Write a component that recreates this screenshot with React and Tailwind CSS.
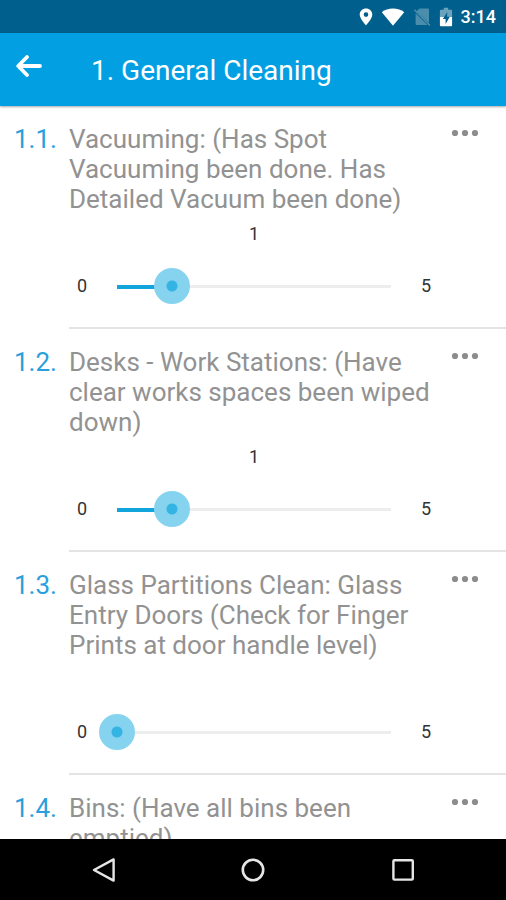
import { useState } from 'react';

const MAX_SCORE = 5;

const questions = [
  {
    id: '1.1.',
    title: 'Vacuuming: (Has Spot Vacuuming been done. Has Detailed Vacuum been done)',
    score: 1,
  },
  {
    id: '1.2.',
    title: 'Desks - Work Stations: (Have clear works spaces been wiped down)',
    score: 1,
  },
  {
    id: '1.3.',
    title: 'Glass Partitions Clean: Glass Entry Doors (Check for Finger Prints at door handle level)',
    score: 0,
  },
  {
    id: '1.4.',
    title: 'Bins: (Have all bins been emptied)',
    score: 0,
  },
];

function StatusBar() {
  return (
    <div className="flex h-[33px] shrink-0 items-center justify-end bg-[#005f8c] pr-2.5 text-white">
      <svg className="mr-2 h-[18px] w-3.5" viewBox="0 0 14 18" fill="currentColor">
        <path
          fillRule="evenodd"
          d="M7 0.5C3.4 0.5 0.7 3.2 0.7 6.6 0.7 11 7 17.5 7 17.5S13.3 11 13.3 6.6C13.3 3.2 10.6 0.5 7 0.5ZM7 4.3a2.3 2.3 0 1 1 0 4.6 2.3 2.3 0 0 1 0-4.6Z"
        />
      </svg>
      <svg className="mr-2 h-[18px] w-6" viewBox="0 0 24 18" fill="currentColor">
        <path d="M0.8 4.2C3.8 1.8 7.6 0.5 12 0.5s8.2 1.3 11.2 3.7L12 17.8Z" />
      </svg>
      <svg className="mr-2 h-5 w-[18px]" viewBox="0 0 18 20">
        <path d="M6.5 1.5H15a1 1 0 0 1 1 1V16L3.6 4.2ZM2.6 6.2 14.5 18H3.6a1 1 0 0 1-1-1Z" fill="#4a8dad" />
        <path d="M1.4 2.8 16.8 18.4" stroke="#4a8dad" strokeWidth="1.6" />
      </svg>
      <svg className="mr-2 h-5 w-3.5" viewBox="0 0 14 20">
        <path d="M4.8 0.8h4.4v1.9h2.9a1 1 0 0 1 1 1V10H0.9V3.7a1 1 0 0 1 1-1h2.9Z" fill="#6ba3be" />
        <path d="M0.9 10h12.2v8.2a1 1 0 0 1-1 1H1.9a1 1 0 0 1-1-1Z" fill="#fff" />
        <path d="M8.3 5 3.8 12.1h2.8V17l4.2-7.2H8.1Z" fill="#005f8c" />
      </svg>
      <span className="text-lg font-medium">3:14</span>
    </div>
  );
}

function Header() {
  return (
    <header className="z-10 flex h-[73px] shrink-0 items-center bg-[#029fe3] text-white shadow-[0_1px_2px_rgba(0,0,0,0.35)]">
      <button type="button" aria-label="Back" className="flex h-full w-[91px] items-center pb-2 pl-4">
        <svg
          className="h-[22px] w-[26px]"
          viewBox="0 0 26 22"
          fill="none"
          stroke="currentColor"
          strokeWidth="3.8"
          strokeLinecap="round"
          strokeLinejoin="round"
        >
          <path d="M24 11H2.4M11 2 2.2 11 11 20" />
        </svg>
      </button>
      <h1 className="pt-0.5 text-[28px]">1. General Cleaning</h1>
    </header>
  );
}

function ScoreSlider({ id, score, onChange }) {
  return (
    <div className="text-lg text-[#333]">
      <output htmlFor={id} className="block h-10 pt-2 text-center leading-6">
        {score > 0 ? score : ''}
      </output>
      <div className="flex items-center gap-1 pt-3.5">
        <span className="w-[26px] text-center">0</span>
        <input
          id={id}
          type="range"
          min="0"
          max={MAX_SCORE}
          value={score}
          onChange={(e) => onChange(Number(e.target.value))}
          style={{ '--fill': score / MAX_SCORE }}
          className="h-9 min-w-0 flex-1 cursor-pointer appearance-none bg-[image:linear-gradient(#12a5dc,#12a5dc),linear-gradient(#ededed,#ededed)] bg-[size:calc((100%-36px)*var(--fill))_4px,calc(100%-36px)_3px] bg-[position:18px_17px,18px_17px] bg-no-repeat [&::-webkit-slider-thumb]:size-9 [&::-webkit-slider-thumb]:appearance-none [&::-webkit-slider-thumb]:rounded-full [&::-webkit-slider-thumb]:bg-[radial-gradient(circle,#33b4e3_5px,#86d3ef_6px)]"
        />
        <span className="w-[26px] text-center">{MAX_SCORE}</span>
      </div>
    </div>
  );
}

function Question({ question }) {
  const [score, setScore] = useState(question.score);
  const sliderId = `score-${question.id}`;

  return (
    <li className="flex text-[26px] leading-[30px]">
      <span className="w-[69px] shrink-0 pl-3.5 pt-[18px] text-[#2a9fdc]">{question.id}</span>
      <div className="flex min-w-0 flex-1 border-b-2 border-[#e4e4e4] pb-[23px]">
        <div className="min-w-0 flex-1 pt-[18px]">
          <label htmlFor={sliderId} className="block text-[#929292]">
            {question.title}
          </label>
          <ScoreSlider id={sliderId} score={score} onChange={setScore} />
        </div>
        <button
          type="button"
          aria-label="More options"
          className="flex h-[54px] w-[67px] shrink-0 items-center pl-3"
        >
          <svg className="h-2 w-7" viewBox="0 0 28 8" fill="#8c8c8c">
            <circle cx="4" cy="4" r="3.1" />
            <circle cx="14" cy="4" r="3.1" />
            <circle cx="24" cy="4" r="3.1" />
          </svg>
        </button>
      </div>
    </li>
  );
}

function NavBar() {
  return (
    <nav className="flex h-[61px] shrink-0 items-center justify-center bg-black text-[#e6e6e6]">
      <button type="button" aria-label="Back" className="flex w-[150px] justify-center">
        <svg className="size-6" viewBox="0 0 24 24" fill="none" stroke="currentColor" strokeWidth="2.4">
          <path d="M22.6 1.4V22.6L3 12Z" strokeLinejoin="round" />
        </svg>
      </button>
      <button type="button" aria-label="Home" className="flex w-[150px] justify-center">
        <svg className="size-6" viewBox="0 0 24 24" fill="none" stroke="currentColor" strokeWidth="2.6">
          <circle cx="12" cy="12" r="10.2" />
        </svg>
      </button>
      <button type="button" aria-label="Recent apps" className="flex w-[150px] justify-center">
        <svg className="size-6" viewBox="0 0 24 24" fill="none" stroke="currentColor" strokeWidth="2.4">
          <rect x="2.4" y="2.2" width="19.4" height="19.4" rx="1" />
        </svg>
      </button>
    </nav>
  );
}

function App() {
  return (
    <div className="flex h-screen flex-col bg-white font-[Roboto,sans-serif]">
      <StatusBar />
      <Header />
      <main className="min-h-0 flex-1 overflow-y-auto [scrollbar-width:none]">
        <ul>
          {questions.map((question) => (
            <Question key={question.id} question={question} />
          ))}
        </ul>
      </main>
      <NavBar />
    </div>
  );
}

export default App;
